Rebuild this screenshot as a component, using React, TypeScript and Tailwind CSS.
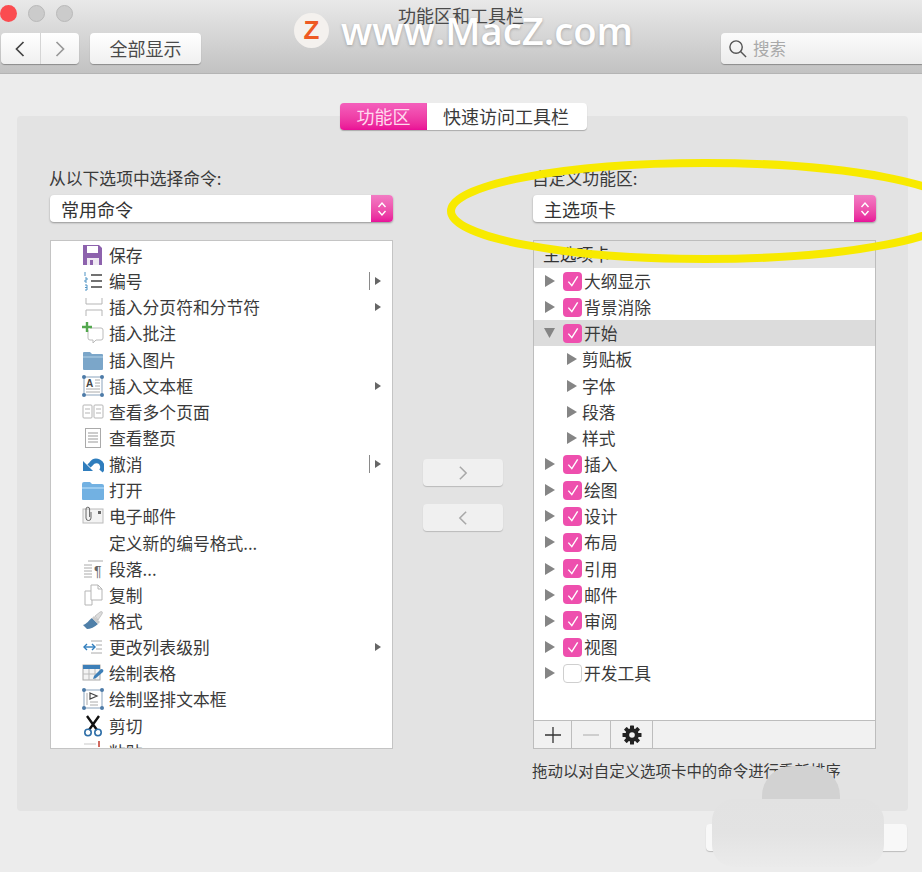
import React from "react";

const cjk = "font-['Noto_Sans_CJK_SC','Noto_Sans',sans-serif]";

const IconBox = ({ children }: { children: React.ReactNode }) => (
  <svg viewBox="0 0 22 22" className="h-[22px] w-[22px] shrink-0">
    {children}
  </svg>
);

const icons: Record<string, React.ReactNode> = {
  save: (
    <IconBox>
      <path d="M1 1h16l3 3v17H1z" fill="#8d62ad" />
      <rect x="5" y="2" width="11" height="7" fill="#fff" />
      <rect x="5" y="14" width="12" height="7" fill="#efe9f3" />
      <rect x="8" y="16" width="3" height="5" fill="#8d62ad" />
    </IconBox>
  ),
  number: (
    <IconBox>
      <path d="M3 2v4M3 8h2v2H3v2h2M3 15h2v5H3M3 17.5h2" stroke="#4f93c4" strokeWidth="1" fill="none" />
      <path d="M9 5h11M9 11h11M9 17h11" stroke="#444" strokeWidth="1.6" />
    </IconBox>
  ),
  pagebreak: (
    <IconBox>
      <path d="M4 2v6h16V2M4 20v-6h16v6" stroke="#b5b5b5" strokeWidth="1" fill="none" />
    </IconBox>
  ),
  comment: (
    <IconBox>
      <path d="M8 6h11a2 2 0 0 1 2 2v8a2 2 0 0 1-2 2h-5l-3 3v-3H8a2 2 0 0 1-2-2V8" stroke="#bbb" fill="#fff" />
      <path d="M5 0v10M0 5h10" stroke="#53a84e" strokeWidth="2.4" />
    </IconBox>
  ),
  picture: (
    <IconBox>
      <path d="M1 4a1 1 0 0 1 1-1h6l2 2h10a1 1 0 0 1 1 1v14a1 1 0 0 1-1 1H2a1 1 0 0 1-1-1z" fill="#7ba6c9" />
      <path d="M1 7h20v2H1z" fill="#97bcd8" />
    </IconBox>
  ),
  textbox: (
    <IconBox>
      <rect x="2" y="2" width="18" height="18" fill="#fff" stroke="#8aa3bd" />
      <text x="4" y="12" fontSize="10" fontWeight="700" fill="#444" fontFamily="Liberation Sans">A</text>
      <path d="M13 5h5M13 8h5M13 11h5M4 14h14M4 17h14" stroke="#aaa" />
      <g fill="#4d7ba8">
        <circle cx="2" cy="2" r="2" />
        <circle cx="20" cy="2" r="2" />
        <circle cx="2" cy="20" r="2" />
        <circle cx="20" cy="20" r="2" />
      </g>
    </IconBox>
  ),
  multipage: (
    <IconBox>
      <g fill="#fff" stroke="#b5b5b5">
        <rect x="1" y="4" width="9" height="13" rx="1" />
        <rect x="12" y="4" width="9" height="13" rx="1" />
      </g>
      <path d="M3 8h5M3 12h5M14 8h5M14 12h5" stroke="#b5b5b5" />
    </IconBox>
  ),
  fullpage: (
    <IconBox>
      <rect x="3.5" y="1.5" width="15" height="19" fill="#fff" stroke="#aaa" />
      <path d="M6 6h10M6 9h10M6 12h10M6 15h10" stroke="#999" />
    </IconBox>
  ),
  undo: (
    <IconBox>
      <path d="M19 18c2.500-3 1.500-8-2-9.500-3-1.300-6-.500-8 2.500l-2 2" stroke="#2f7dbd" strokeWidth="4.500" fill="none" />
      <path d="M1 8v10h10z" fill="#2f7dbd" />
    </IconBox>
  ),
  open: (
    <IconBox>
      <path d="M0 5a2 2 0 0 1 2-2h6l2 2h10a2 2 0 0 1 2 2v13a1 1 0 0 1-1 1H1a1 1 0 0 1-1-1z" fill="#72b1e2" />
      <path d="M0 8h22v2H0z" fill="#9bcbef" />
    </IconBox>
  ),
  mail: (
    <IconBox>
      <rect x="1" y="4" width="20" height="14" fill="#f3f3f3" stroke="#bbb" />
      <rect x="16" y="6" width="3" height="3" fill="#666" />
      <path d="M9 7v6a2.500 2.500 0 0 1-5 0V4a1.800 1.800 0 0 1 3.600 0v8" stroke="#666" fill="none" />
    </IconBox>
  ),
  para: (
    <IconBox>
      <path d="M2 7h8M2 10h8M2 13h8M2 16h8M2 19h8M6 3h15" stroke="#aaa" />
      <text x="12" y="18" fontSize="14" fill="#666" fontFamily="Liberation Sans">¶</text>
    </IconBox>
  ),
  copy: (
    <IconBox>
      <path d="M3 7h7v14H3z" fill="#fff" stroke="#b5b5b5" />
      <path d="M9 1h7l4 4v11H9z" fill="#fff" stroke="#b5b5b5" />
      <path d="M16 1v4h4" fill="none" stroke="#b5b5b5" />
    </IconBox>
  ),
  brush: (
    <IconBox>
      <path d="M1 15c4-1 6-5 9-7l6 6c-3 3-8 5-11 5z" fill="#4f7fa8" />
      <path d="M10 8l6 6 2-2-6-6z" fill="#ccc" />
      <path d="M13 6l5-4c2-1 3 0 2 2l-4 6z" fill="#dcdcdc" stroke="#aaa" strokeWidth=".6" />
    </IconBox>
  ),
  level: (
    <IconBox>
      <path d="M9 5h11M14 9h6M14 13h6M9 17h11" stroke="#aaa" />
      <path d="M2 11h11" stroke="#2f7dbd" strokeWidth="1.400" />
      <path d="M5 8l-3 3 3 3M10 8l3 3-3 3" stroke="#2f7dbd" strokeWidth="1.400" fill="none" />
    </IconBox>
  ),
  table: (
    <IconBox>
      <rect x="1" y="3" width="17" height="15" fill="#f3f3f3" stroke="#aaa" />
      <rect x="1" y="3" width="17" height="4" fill="#3d7fb8" />
      <path d="M7 7v11M13 7v11M1 12h17" stroke="#bbb" />
      <path d="M11 17l1-3 7-7c2 0 3 1 2 3l-7 6z" fill="#3d7fb8" />
    </IconBox>
  ),
  vertical: (
    <IconBox>
      <rect x="2" y="2" width="18" height="18" fill="#fff" stroke="#8aa3bd" />
      <path d="M8 5l7 3-7 3zM8 5v6" stroke="#444" strokeWidth="1.200" fill="none" />
      <path d="M5 5v12M8 14h8M8 17h8" stroke="#aaa" />
      <g fill="#4d7ba8">
        <circle cx="2" cy="2" r="2" />
        <circle cx="20" cy="2" r="2" />
        <circle cx="2" cy="20" r="2" />
        <circle cx="20" cy="20" r="2" />
      </g>
    </IconBox>
  ),
  scissors: (
    <IconBox>
      <path d="M5 1l10 14M17 1L7 15" stroke="#111" strokeWidth="2.400" />
      <circle cx="6" cy="17.500" r="3.200" fill="none" stroke="#2f6fa8" strokeWidth="1.600" />
      <circle cx="16" cy="17.500" r="3.200" fill="none" stroke="#2f6fa8" strokeWidth="1.600" />
    </IconBox>
  ),
  paste: (
    <IconBox>
      <path d="M2 3h12" stroke="#c9c9c9" />
      <path d="M17 0v6" stroke="#c0392b" strokeWidth="1.500" />
    </IconBox>
  ),
};

const commands: { icon?: string; label: string; more?: "split" | "plain" }[] = [
  { icon: "save", label: "保存" },
  { icon: "number", label: "编号", more: "split" },
  { icon: "pagebreak", label: "插入分页符和分节符", more: "plain" },
  { icon: "comment", label: "插入批注" },
  { icon: "picture", label: "插入图片" },
  { icon: "textbox", label: "插入文本框", more: "plain" },
  { icon: "multipage", label: "查看多个页面" },
  { icon: "fullpage", label: "查看整页" },
  { icon: "undo", label: "撤消", more: "split" },
  { icon: "open", label: "打开" },
  { icon: "mail", label: "电子邮件" },
  { label: "定义新的编号格式..." },
  { icon: "para", label: "段落..." },
  { icon: "copy", label: "复制" },
  { icon: "brush", label: "格式" },
  { icon: "level", label: "更改列表级别", more: "plain" },
  { icon: "table", label: "绘制表格" },
  { icon: "vertical", label: "绘制竖排文本框" },
  { icon: "scissors", label: "剪切" },
  { icon: "paste", label: "粘贴" },
];

const tabs: { label: string; level: 0 | 1; checked?: boolean; open?: boolean; active?: boolean }[] = [
  { label: "大纲显示", level: 0, checked: true },
  { label: "背景消除", level: 0, checked: true },
  { label: "开始", level: 0, checked: true, open: true, active: true },
  { label: "剪贴板", level: 1 },
  { label: "字体", level: 1 },
  { label: "段落", level: 1 },
  { label: "样式", level: 1 },
  { label: "插入", level: 0, checked: true },
  { label: "绘图", level: 0, checked: true },
  { label: "设计", level: 0, checked: true },
  { label: "布局", level: 0, checked: true },
  { label: "引用", level: 0, checked: true },
  { label: "邮件", level: 0, checked: true },
  { label: "审阅", level: 0, checked: true },
  { label: "视图", level: 0, checked: true },
  { label: "开发工具", level: 0, checked: false },
];

const Chevron = ({ dir, color, size = 20 }: { dir: "left" | "right"; color: string; size?: number }) => (
  <svg viewBox="0 0 20 20" width={size} height={size} fill="none" stroke={color} strokeWidth="1.700">
    <path d={dir === "left" ? "M13.500 3l-7 7 7 7" : "M6.500 3l7 7-7 7"} />
  </svg>
);

const Select = ({ value }: { value: string }) => (
  <div className="flex h-[27px] w-[343px] overflow-hidden rounded-[4px] bg-white shadow-[0_1px_2px_rgba(0,0,0,0.35)]">
    <span className="flex-1 pl-[11px] text-[18px] leading-[28px] text-[#333]">{value}</span>
    <span className="flex w-[22px] items-center justify-center bg-gradient-to-b from-[#f27cc4] to-[#e8109a]">
      <svg viewBox="0 0 12 20" className="h-[20px] w-[12px]" fill="none" stroke="#fff" strokeWidth="1.400">
        <path d="M2.500 8l3.500-4 3.500 4M2.500 12l3.500 4 3.500-4" />
      </svg>
    </span>
  </div>
);

const Triangle = ({ open, className }: { open?: boolean; className?: string }) => (
  <svg viewBox="0 0 12 12" className={`h-[12px] w-[12px] shrink-0 ${className ?? ""}`}>
    <path d={open ? "M0 1h11L5.500 11z" : "M1 0l10 6-10 6z"} fill="#858585" />
  </svg>
);

const CommandRow = ({ icon, label, more }: (typeof commands)[number]) => (
  <div className="flex h-[26.15px] items-center pl-[31px] pr-[11px]">
    <span className="flex w-[27px] shrink-0">{icon && icons[icon]}</span>
    <span className="flex-1 text-[16.8px] leading-[26px] text-[#3a3a3a]">{label}</span>
    {more === "split" && <span className="mr-[5px] h-[18px] w-px bg-[#8a8a8a]" />}
    {more && (
      <svg viewBox="0 0 6 8" className="h-[8px] w-[6px]">
        <path d="M0 0l6 4-6 4z" fill="#666" />
      </svg>
    )}
  </div>
);

const TabRow = ({ label, level, checked, open, active }: (typeof tabs)[number]) => (
  <div className={`flex h-[26.15px] items-center ${active ? "bg-[#dcdcdc]" : ""}`}>
    {level === 1 ? (
      <>
        <Triangle className="ml-[32px] mr-[4px]" />
        <span className="text-[16.8px] leading-[26px] text-[#3a3a3a]">{label}</span>
      </>
    ) : (
      <>
        <Triangle open={open} className="ml-[10px] mr-[7px]" />
        {checked ? (
          <span className="flex h-[19px] w-[19px] shrink-0 items-center justify-center rounded-[4px] bg-[#ee4fae]">
            <svg viewBox="0 0 12 12" className="h-[14px] w-[14px]" fill="none" stroke="#fff" strokeWidth="1.200">
              <path d="M2 6.500l3 3.500 5-8" />
            </svg>
          </span>
        ) : (
          <span className="h-[19px] w-[19px] shrink-0 rounded-[4px] border border-[#cfcfcf] bg-white" />
        )}
        <span className="ml-[2px] text-[16.8px] leading-[26px] text-[#3a3a3a]">{label}</span>
      </>
    )}
  </div>
);

const MoveButton = ({ dir }: { dir: "left" | "right" }) => (
  <div className="flex h-[27px] w-[80px] items-center justify-center rounded-[4px] bg-[#f0f0f0] shadow-[0_1px_1px_rgba(0,0,0,0.18)]">
    <Chevron dir={dir} color="#a8a8a8" size={18} />
  </div>
);

const App = () => {
  return (
    <div className={`relative h-[872px] w-[922px] overflow-hidden bg-[#ececec] ${cjk}`}>
      {/* title bar */}
      <div className="h-[74px] border-b border-[#b4b4b4] bg-gradient-to-b from-[#e9e9e9] to-[#c2c2c2]">
        <div className="grid h-[33px] grid-cols-[1fr_auto_1fr] pt-[5px]">
          <div className="flex gap-[11px]">
            <span className="h-[17px] w-[17px] rounded-full bg-[#fb4c50]" />
            <span className="h-[17px] w-[17px] rounded-full border border-[#b9b9b9] bg-[#cbcbcb]" />
            <span className="h-[17px] w-[17px] rounded-full border border-[#b9b9b9] bg-[#cbcbcb]" />
          </div>
          <span className="text-[18px] leading-[20px] text-[#4a4a4a]">功能区和工具栏</span>
        </div>
        <div className="flex h-[31px] items-stretch pl-[1px]">
          <div className="flex w-[78px] rounded-[4px] bg-gradient-to-b from-[#ffffff] to-[#f0f0f0] shadow-[0_1px_1px_rgba(0,0,0,0.3)]">
            <span className="flex flex-1 items-center justify-center border-r border-[#d5d5d5]">
              <Chevron dir="left" color="#444" />
            </span>
            <span className="flex flex-1 items-center justify-center">
              <Chevron dir="right" color="#999" />
            </span>
          </div>
          <div className="ml-[11px] w-[111px] rounded-[4px] bg-gradient-to-b from-[#ffffff] to-[#f0f0f0] text-center text-[18px] leading-[31px] text-[#4a4a4a] shadow-[0_1px_1px_rgba(0,0,0,0.3)]">
            全部显示
          </div>
          <div className="ml-auto flex w-[201px] items-center rounded-l-[4px] bg-gradient-to-b from-[#fbfbfb] to-[#ececec] pl-[7px] shadow-[0_1px_1px_rgba(0,0,0,0.3)]">
            <svg viewBox="0 0 20 20" className="h-[19px] w-[19px]" fill="none" stroke="#555" strokeWidth="1.500">
              <circle cx="8.500" cy="8.500" r="6.500" />
              <path d="M13 13l6 6" />
            </svg>
            <span className="ml-[6px] text-[16.5px] text-[#a9a9a9]">搜索</span>
          </div>
        </div>
      </div>

      {/* tabs */}
      <div className="relative z-10 mt-[29px] -mb-[14px] flex h-[27px] justify-center pl-[5px]">
        <span className="w-[87px] rounded-l-[4px] bg-gradient-to-b from-[#f45fbc] to-[#ea0c96] text-center text-[18px] leading-[27px] text-[#ffd9ee] shadow-[0_1px_1px_rgba(0,0,0,0.25)]">
          功能区
        </span>
        <span className="w-[160px] rounded-r-[4px] bg-white pr-[2px] text-center text-[18px] leading-[27px] text-[#3a3a3a] shadow-[0_1px_1px_rgba(0,0,0,0.25)]">
          快速访问工具栏
        </span>
      </div>

      {/* panel */}
      <div className="mx-[17px] flex h-[695px] w-[891px] rounded-[4px] bg-[#e3e3e3] px-[33px] pt-[49px]">
        <div className="w-[343px]">
          <p className="mb-[4px] -ml-[1px] h-[26px] text-[16.8px] leading-[26px] text-[#3a3a3a]">从以下选项中选择命令:</p>
          <Select value="常用命令" />
          <div className="mt-[18px] h-[509px] overflow-hidden border border-[#c4c4c4] bg-white pt-[1px]">
            {commands.map((c) => (
              <CommandRow key={c.label} {...c} />
            ))}
          </div>
        </div>

        <div className="flex w-[140px] shrink-0 flex-col items-center gap-[18px] pt-[294px]">
          <MoveButton dir="right" />
          <MoveButton dir="left" />
        </div>

        <div className="w-[343px] shrink-0">
          <p className="mb-[4px] -ml-[1px] h-[26px] text-[16.8px] leading-[26px] text-[#3a3a3a]">自定义功能区:</p>
          <Select value="主选项卡" />
          <div className="mt-[18px] flex h-[509px] flex-col border border-[#bdbdbd] bg-white">
            <div className="h-[27px] bg-[#e4e4e4] pl-[9px] text-[16.8px] leading-[27px] text-[#333]">主选项卡</div>
            {tabs.map((t) => (
              <TabRow key={t.label} {...t} />
            ))}
            <div className="mt-auto flex h-[28px] border-t border-[#bdbdbd] bg-[#f1f1f1]">
              <span className="flex w-[38px] items-center justify-center border-r border-[#bdbdbd]">
                <svg viewBox="0 0 16 16" className="h-[16px] w-[16px]" stroke="#333" strokeWidth="1.300">
                  <path d="M8 0v16M0 8h16" />
                </svg>
              </span>
              <span className="flex w-[39px] items-center justify-center border-r border-[#bdbdbd]">
                <svg viewBox="0 0 16 2" className="h-[2px] w-[16px]" stroke="#bcbcbc" strokeWidth="1.300">
                  <path d="M0 1h16" />
                </svg>
              </span>
              <span className="flex w-[42px] items-center justify-center border-r border-[#bdbdbd]">
                <svg viewBox="0 0 20 20" className="h-[20px] w-[20px]">
                  <circle cx="10" cy="10" r="6.800" fill="#222" />
                  <g fill="#222">
                    <rect x="8" y="0.500" width="4" height="19" rx=".6" />
                    <rect x="8" y="0.500" width="4" height="19" rx=".6" transform="rotate(45 10 10)" />
                    <rect x="8" y="0.500" width="4" height="19" rx=".6" transform="rotate(90 10 10)" />
                    <rect x="8" y="0.500" width="4" height="19" rx=".6" transform="rotate(135 10 10)" />
                  </g>
                  <circle cx="10" cy="10" r="2.800" fill="#f1f1f1" />
                </svg>
              </span>
            </div>
          </div>
          <p className="mt-[9px] -ml-[1px] whitespace-nowrap text-[15.45px] leading-[24px] text-[#3a3a3a]">
            拖动以对自定义选项卡中的命令进行重新排序
          </p>
        </div>
      </div>

      {/* ok button behind the smudge */}
      <div className="mt-[13px] ml-[706px] h-[27px] w-[201px] rounded-[4px] bg-[#f8f8f8] shadow-[0_1px_1px_rgba(0,0,0,0.2)]" />

      {/* pasted-on smudge */}
      <div className="absolute left-[762px] top-[766px] h-[40px] w-[78px] rounded-t-[30px] bg-[#d2d2d2]" />
      <div className="absolute left-[712px] top-[799px] h-[68px] w-[172px] rounded-[22px] bg-gradient-to-b from-[#e2e2e2] via-[#e3e3e3] to-[#ebebeb]" />

      {/* watermark */}
      <div className="absolute left-[294px] top-[9px] flex items-center">
        <span className="flex h-[35px] w-[35px] items-center justify-center rounded-full bg-[#f4f1ee] font-['Liberation_Sans',sans-serif] text-[26px] font-bold text-[#ee5a24]">
          Z
        </span>
        <span className="ml-[12px] font-['Open_Sans',sans-serif] text-[38.3px] font-semibold leading-[42px] text-white [text-shadow:0_1px_3px_rgba(0,0,0,0.25)]">
          www.MacZ.com
        </span>
      </div>

      {/* yellow marker ellipse */}
      <svg className="pointer-events-none absolute left-0 top-0" width="922" height="872">
        <ellipse cx="705" cy="211" rx="254" ry="48" fill="none" stroke="#f8ea00" strokeWidth="8" />
      </svg>
    </div>
  );
};

export default App;
